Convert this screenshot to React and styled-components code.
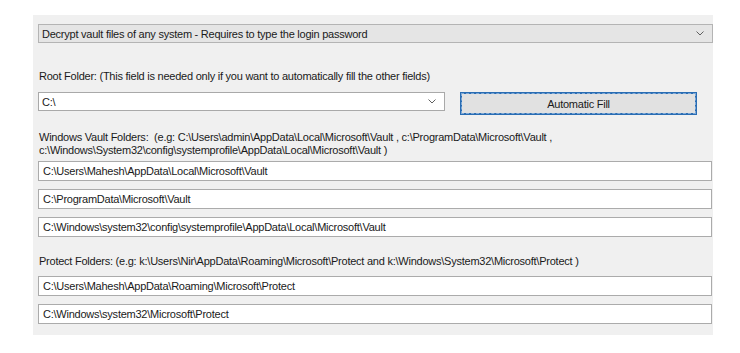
import styled, { createGlobalStyle } from "styled-components";

const GlobalStyle = createGlobalStyle`
  html, body {
    margin: 0;
    padding: 0;
    background: #ffffff;
  }
  body {
    font-family: "Liberation Sans", Arial, sans-serif;
    font-size: 11px;
    letter-spacing: -0.24px;
    color: #1a1a1a;
  }
`;

const Page = styled.div`
  width: 740px;
  height: 353px;
  padding: 15px 0 0 33px;
  box-sizing: border-box;
`;

const Panel = styled.div`
  width: 680px;
  height: 320px;
  box-sizing: border-box;
  background: #f0f0f0;
  padding: 9px 0 0 5px;
  display: flex;
  flex-direction: column;
`;

const Combo = styled.div`
  display: flex;
  align-items: center;
  justify-content: space-between;
  box-sizing: border-box;
  height: ${(p) => p.$height || 19}px;
  width: ${(p) => (p.$width ? `${p.$width}px` : "100%")};
  padding: 0 8px 0 3px;
  border: 1px solid ${(p) => (p.$editable ? "#a9a9a9" : "#b4b4b4")};
  background: ${(p) => (p.$editable ? "#ffffff" : "#e5e5e5")};
  white-space: nowrap;
`;

const Chevron = () => (
  <svg width="8" height="5" viewBox="0 0 8 5">
    <path d="M0.5 0.5 L4 4 L7.5 0.5" fill="none" stroke="#606060" strokeWidth="1" />
  </svg>
);

const Label = styled.div`
  line-height: 13px;
  margin-top: ${(p) => p.$top}px;
  margin-bottom: ${(p) => p.$bottom}px;
  padding-left: 1px;
  white-space: nowrap;
`;

const Row = styled.div`
  display: flex;
  align-items: flex-start;
  gap: 15px;
  height: 23px;
`;

const FillButton = styled.button`
  width: 237px;
  height: 23px;
  box-sizing: border-box;
  border: 2px solid #2a6db3;
  outline: 1px dashed #7fa9d6;
  outline-offset: -2px;
  background: #e1e1e1;
  font-family: inherit;
  font-size: 11px;
  letter-spacing: inherit;
  color: #1a1a1a;
  padding: 0;
`;

const Fields = styled.div`
  display: flex;
  flex-direction: column;
  gap: 8px;
`;

const Field = styled.div`
  box-sizing: border-box;
  height: 20px;
  margin-right: 1px;
  border: 1px solid #ababab;
  background: #ffffff;
  padding: 0 4px;
  line-height: 18px;
  white-space: nowrap;
`;

const vaultFolders = [
  "C:\\Users\\Mahesh\\AppData\\Local\\Microsoft\\Vault",
  "C:\\ProgramData\\Microsoft\\Vault",
  "C:\\Windows\\system32\\config\\systemprofile\\AppData\\Local\\Microsoft\\Vault",
];

const protectFolders = [
  "C:\\Users\\Mahesh\\AppData\\Roaming\\Microsoft\\Protect",
  "C:\\Windows\\system32\\Microsoft\\Protect",
];

export default function App() {
  return (
    <>
      <GlobalStyle />
      <Page>
        <Panel>
          <Combo>
            <span>Decrypt vault files of any system - Requires to type the login password</span>
            <Chevron />
          </Combo>

          <Label $top={27} $bottom={9}>
            Root Folder: (This field is needed only if you want to automatically fill the other fields)
          </Label>
          <Row>
            <Combo $editable $width={407}>
              <span>C:\</span>
              <Chevron />
            </Combo>
            <FillButton>Automatic Fill</FillButton>
          </Row>

          <Label $top={16} $bottom={4}>
            Windows Vault Folders:&nbsp; (e.g: C:\Users\admin\AppData\Local\Microsoft\Vault ,
            c:\ProgramData\Microsoft\Vault ,
            <br />
            c:\Windows\System32\config\systemprofile\AppData\Local\Microsoft\Vault )
          </Label>
          <Fields>
            {vaultFolders.map((f) => (
              <Field key={f}>{f}</Field>
            ))}
          </Fields>

          <Label $top={18} $bottom={8}>
            Protect Folders: (e.g: k:\Users\Nir\AppData\Roaming\Microsoft\Protect and
            k:\Windows\System32\Microsoft\Protect )
          </Label>
          <Fields>
            {protectFolders.map((f) => (
              <Field key={f}>{f}</Field>
            ))}
          </Fields>
        </Panel>
      </Page>
    </>
  );
}
